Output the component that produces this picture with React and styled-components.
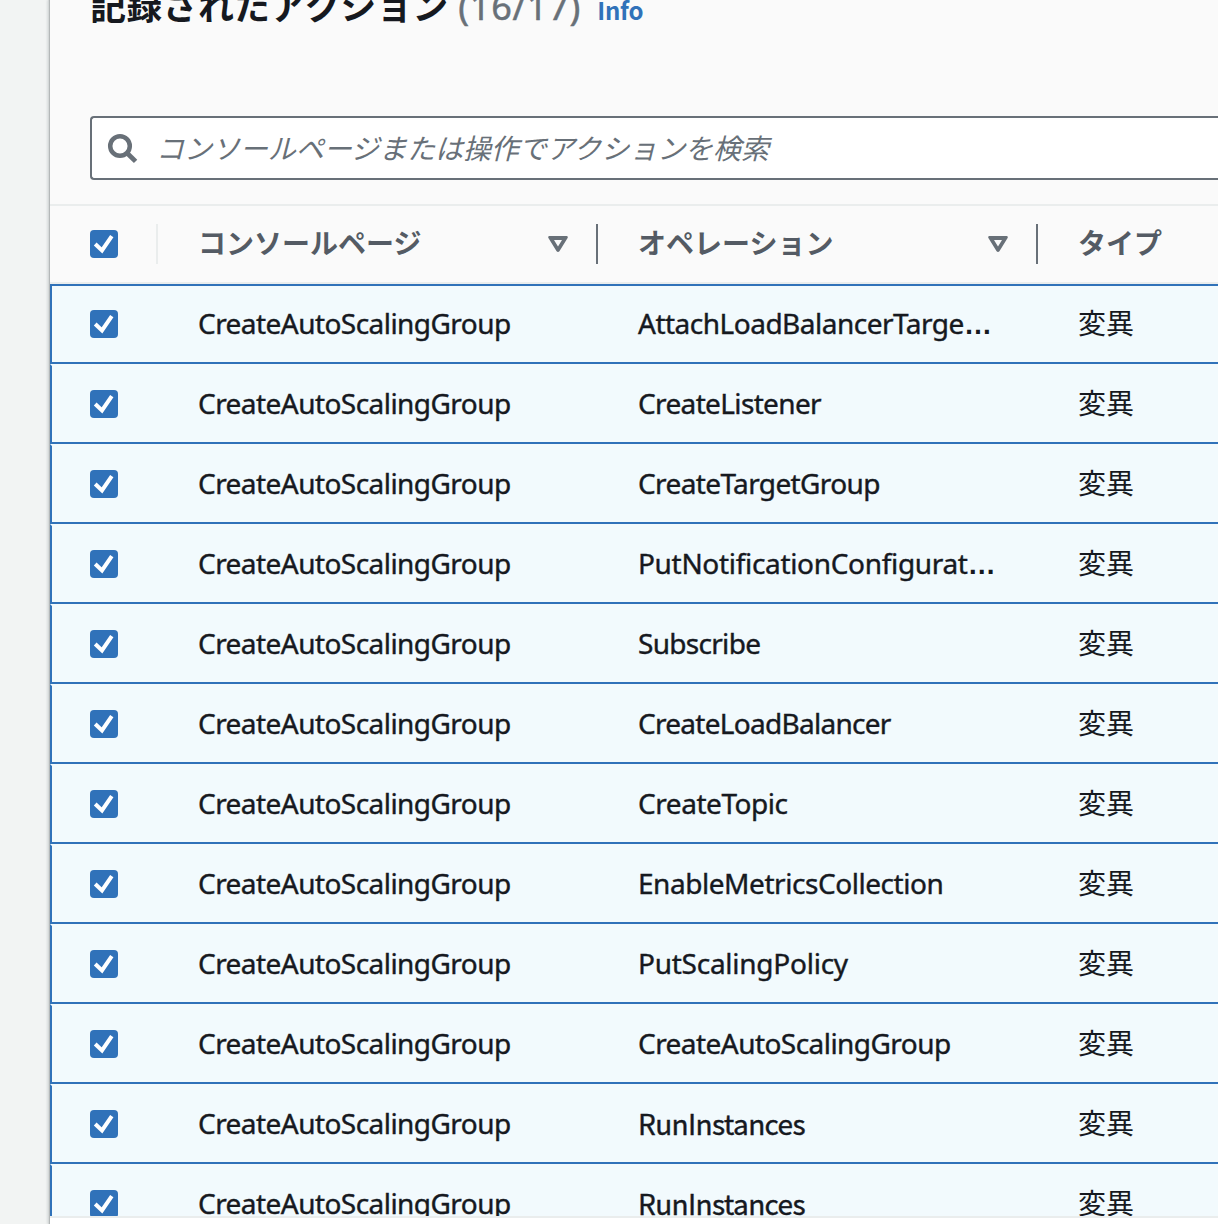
import React from "react";
import styled, { createGlobalStyle } from "styled-components";

const GlobalStyle = createGlobalStyle`
  * { box-sizing: border-box; }
  html, body { margin: 0; padding: 0; overflow: hidden; }
  body {
    background: #f2f4f3;
    color: #16191f;
    font-family: "Noto Sans CJK JP", sans-serif;
    font-size: 28px;
    line-height: 44px;
  }
`;

const Page = styled.div`
  display: flex;
  height: 1224px;
  padding-left: 50px;
  overflow: hidden;
`;

const Panel = styled.section`
  flex: 1;
  min-width: 0;
  display: flex;
  flex-direction: column;
  background: #fff;
  box-shadow: -1px 0 0 #b4b8b8, -2px 0 0 #d5d8d8, -3px 0 2px rgba(0, 28, 36, 0.1);
`;

const PanelHeader = styled.header`
  flex: none;
  height: 204px;
  padding: 0 0 24px 40px;
  display: flex;
  flex-direction: column;
  justify-content: space-between;
  background: #fafafa;
`;

const TitleRow = styled.div`
  display: flex;
  align-items: baseline;
  height: 44px;
  margin-top: -18px;
  white-space: nowrap;
`;

const Title = styled.h2`
  margin: 0;
  font: 700 36px/44px "Noto Sans CJK JP", sans-serif;
`;

const Counter = styled.span`
  margin-left: 10px;
  font-family: "Noto Sans", sans-serif;
  font-size: 36px;
  letter-spacing: 0.8px;
  color: #687078;
  -webkit-text-stroke: 0.5px currentColor;
`;

const InfoLink = styled.a`
  margin-left: 16px;
  font-size: 24px;
  font-weight: 700;
  letter-spacing: -0.2px;
  color: #3072b9;
`;

const SearchBox = styled.div`
  display: flex;
  align-items: center;
  gap: 17px;
  height: 64px;
  padding-left: 15px;
  border: 2px solid #687078;
  border-right: 0;
  border-radius: 4px 0 0 4px;
  background: #fff;
  white-space: nowrap;
`;

const SearchHint = styled.span`
  padding-bottom: 3px;
  font-style: italic;
  letter-spacing: -0.05px;
  color: #687078;
`;

const columns = "108px 440px 440px 440px";

const HeadRow = styled.div`
  flex: none;
  display: grid;
  grid-template-columns: ${columns};
  align-items: center;
  height: 80px;
  border-top: 2px solid #eaeded;
  border-bottom: 2px solid #eaeded;
  background: #fafafa;
`;

const HeadCell = styled.div`
  display: flex;
  align-items: center;
  justify-content: space-between;
  height: 40px;
  padding: 0 28px 0 40px;
  border-right: 2px solid ${(p) => p.$line};
  color: #545b64;
`;

const HeadLabel = styled.span`
  font-weight: 700;
  padding-bottom: 4px;
`;

const Rows = styled.div`
  flex: none;
  height: 932px;
  overflow: hidden;
`;

const Row = styled.div`
  display: grid;
  grid-template-columns: ${columns};
  align-items: center;
  height: 80px;
  border-bottom: 2px solid #3072b9;
  border-left: 2px solid #3072b9;
  border-top: ${(p) => (p.$first ? "2px solid #3072b9" : "2px solid #f2fafd")};
  background: #f2fafd;
`;

const Cell = styled.div`
  display: flex;
  align-items: baseline;
  padding-left: 38px;
  white-space: nowrap;
`;

const NameCell = styled(Cell)`
  padding-bottom: ${(p) => (p.$plain ? 3 : 2)}px;
  font-family: ${(p) => (p.$plain ? '"Noto Sans CJK JP"' : '"Noto Sans"')}, sans-serif;
  letter-spacing: ${(p) => p.$track};
  -webkit-text-stroke: 0.4px currentColor;
`;

const TypeCell = styled(Cell)`
  padding-bottom: 4px;
`;

const Ellipsis = styled.span`
  font-family: "Liberation Sans", sans-serif;
  font-weight: 700;
  line-height: 1;
  letter-spacing: 0;
  -webkit-text-stroke: 0;
`;

const Footer = styled.div`
  flex: 1;
  border-top: 2px solid #eaeded;
`;

const Box = styled.svg`
  display: block;
  width: 28px;
  height: 28px;
`;

const Checkbox = () => (
  <Box viewBox="0 0 28 28">
    <rect width="28" height="28" rx="4" fill="#3072b9" />
    <path d="M5.2 14 L12 20.4 L21.8 6.2" fill="none" stroke="#fff" strokeWidth="4" />
  </Box>
);

const SearchIcon = () => (
  <svg width="32" height="32" viewBox="0 0 32 32" fill="none" stroke="#687078">
    <circle cx="13" cy="14" r="9.8" strokeWidth="4.5" />
    <path d="M20 21 L28.6 29.4" strokeWidth="4.8" />
  </svg>
);

const SortIcon = () => (
  <svg width="20" height="16" viewBox="0 0 20 16" fill="#687078" fillRule="evenodd">
    <path d="M1 0 H19 Q20.2 0.6 19.6 2 L11.4 15.2 Q10 16.6 8.6 15.2 L0.4 2 Q-0.2 0.6 1 0 Z M6 4 H14 L10 10.4 Z" />
  </svg>
);

const operations = [
  { name: "AttachLoadBalancerTarge", track: "-0.5px", cut: true },
  { name: "CreateListener", track: "-0.64px" },
  { name: "CreateTargetGroup", track: "-0.62px" },
  { name: "PutNotificationConfigurat", track: "-0.32px", cut: true },
  { name: "Subscribe", track: "-0.7px" },
  { name: "CreateLoadBalancer", track: "-0.72px" },
  { name: "CreateTopic", track: "-0.45px" },
  { name: "EnableMetricsCollection", track: "-0.45px" },
  { name: "PutScalingPolicy", track: "-0.25px" },
  { name: "CreateAutoScalingGroup", track: "-0.55px" },
  { name: "RunInstances", track: "-0.64px", plain: true },
  { name: "RunInstances", track: "-0.64px", plain: true },
];

export default function App() {
  return (
    <>
      <GlobalStyle />
      <Page>
        <Panel>
          <PanelHeader>
            <TitleRow>
              <Title>記録されたアクション</Title>
              <Counter>(16/17)</Counter>
              <InfoLink>Info</InfoLink>
            </TitleRow>
            <SearchBox>
              <SearchIcon />
              <SearchHint>コンソールページまたは操作でアクションを検索</SearchHint>
            </SearchBox>
          </PanelHeader>
          <HeadRow>
            <HeadCell $line="#eaeded"><Checkbox /></HeadCell>
            <HeadCell $line="#687078"><HeadLabel>コンソールページ</HeadLabel><SortIcon /></HeadCell>
            <HeadCell $line="#687078"><HeadLabel>オペレーション</HeadLabel><SortIcon /></HeadCell>
            <HeadCell $line="transparent"><HeadLabel>タイプ</HeadLabel></HeadCell>
          </HeadRow>
          <Rows>
            {operations.map(({ name, track, cut, plain }, i) => (
              <Row key={i} $first={i === 0}>
                <Cell><Checkbox /></Cell>
                <NameCell $track="-0.55px">CreateAutoScalingGroup</NameCell>
                <NameCell $track={track} $plain={plain}>{name}{cut && <Ellipsis>…</Ellipsis>}</NameCell>
                <TypeCell>変異</TypeCell>
              </Row>
            ))}
          </Rows>
          <Footer />
        </Panel>
      </Page>
    </>
  );
}
